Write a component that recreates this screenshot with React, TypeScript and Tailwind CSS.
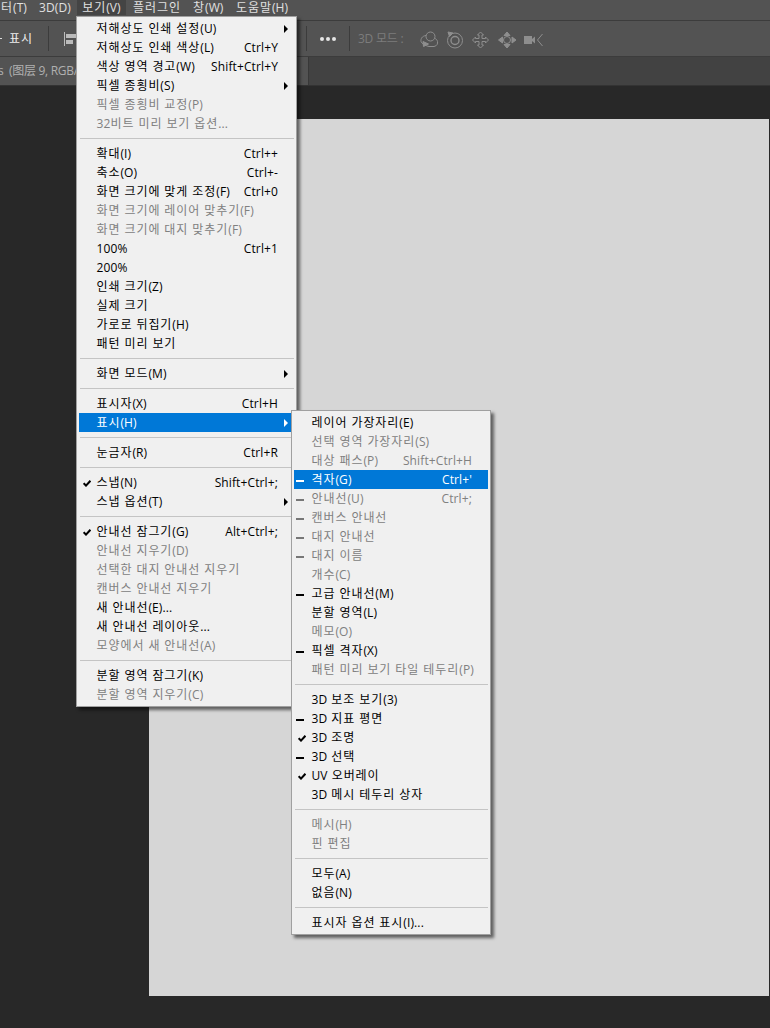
import React from "react";

type Row =
  | { sep: true }
  | { label: string; dis?: boolean; sc?: string; arrow?: boolean; hl?: boolean; mark?: "check" | "dash"; markDis?: boolean };

const S: Row = { sep: true };

const mainMenu: Row[] = [
  { label: "저해상도 인쇄 설정(U)", arrow: true },
  { label: "저해상도 인쇄 색상(L)", sc: "Ctrl+Y" },
  { label: "색상 영역 경고(W)", sc: "Shift+Ctrl+Y" },
  { label: "픽셀 종횡비(S)", arrow: true },
  { label: "픽셀 종횡비 교정(P)", dis: true },
  { label: "32비트 미리 보기 옵션...", dis: true },
  S,
  { label: "확대(I)", sc: "Ctrl++" },
  { label: "축소(O)", sc: "Ctrl+-" },
  { label: "화면 크기에 맞게 조정(F)", sc: "Ctrl+0" },
  { label: "화면 크기에 레이어 맞추기(F)", dis: true },
  { label: "화면 크기에 대지 맞추기(F)", dis: true },
  { label: "100%", sc: "Ctrl+1" },
  { label: "200%" },
  { label: "인쇄 크기(Z)" },
  { label: "실제 크기" },
  { label: "가로로 뒤집기(H)" },
  { label: "패턴 미리 보기" },
  S,
  { label: "화면 모드(M)", arrow: true },
  S,
  { label: "표시자(X)", sc: "Ctrl+H" },
  { label: "표시(H)", arrow: true, hl: true },
  S,
  { label: "눈금자(R)", sc: "Ctrl+R" },
  S,
  { label: "스냅(N)", sc: "Shift+Ctrl+;", mark: "check" },
  { label: "스냅 옵션(T)", arrow: true },
  S,
  { label: "안내선 잠그기(G)", sc: "Alt+Ctrl+;", mark: "check" },
  { label: "안내선 지우기(D)", dis: true },
  { label: "선택한 대지 안내선 지우기", dis: true },
  { label: "캔버스 안내선 지우기", dis: true },
  { label: "새 안내선(E)..." },
  { label: "새 안내선 레이아웃..." },
  { label: "모양에서 새 안내선(A)", dis: true },
  S,
  { label: "분할 영역 잠그기(K)" },
  { label: "분할 영역 지우기(C)", dis: true },
];

const subMenu: Row[] = [
  { label: "레이어 가장자리(E)" },
  { label: "선택 영역 가장자리(S)", dis: true },
  { label: "대상 패스(P)", dis: true, sc: "Shift+Ctrl+H" },
  { label: "격자(G)", sc: "Ctrl+'", hl: true, mark: "dash" },
  { label: "안내선(U)", dis: true, sc: "Ctrl+;", mark: "dash", markDis: true },
  { label: "캔버스 안내선", dis: true, mark: "dash", markDis: true },
  { label: "대지 안내선", dis: true, mark: "dash", markDis: true },
  { label: "대지 이름", dis: true, mark: "dash", markDis: true },
  { label: "개수(C)", dis: true },
  { label: "고급 안내선(M)", mark: "dash" },
  { label: "분할 영역(L)" },
  { label: "메모(O)", dis: true },
  { label: "픽셀 격자(X)", mark: "dash" },
  { label: "패턴 미리 보기 타일 테두리(P)", dis: true },
  S,
  { label: "3D 보조 보기(3)" },
  { label: "3D 지표 평면", mark: "dash" },
  { label: "3D 조명", mark: "check" },
  { label: "3D 선택", mark: "dash" },
  { label: "UV 오버레이", mark: "check" },
  { label: "3D 메시 테두리 상자" },
  S,
  { label: "메시(H)", dis: true },
  { label: "핀 편집", dis: true },
  S,
  { label: "모두(A)" },
  { label: "없음(N)" },
  S,
  { label: "표시자 옵션 표시(I)..." },
];

function Txt({ t }: { t: string }) {
  const parts = t.split(/([\uAC00-\uD7A3 ]+)/).filter(Boolean);
  return (
    <>
      {parts.map((p, i) =>
        /[\uAC00-\uD7A3 ]/.test(p[0]) ? (
          <span key={i} className="tracking-[0.92px]">
            {p}
          </span>
        ) : (
          <span key={i} className="tracking-[0.12px]">
            {p}
          </span>
        )
      )}
    </>
  );
}

function Mark({ kind, color }: { kind: "check" | "dash"; color: string }) {
  if (kind === "dash")
    return <span className="mt-[3px] ml-[2px] block h-[2px] w-[8px]" style={{ backgroundColor: color }} />;
  return (
    <svg className="mt-[1px] ml-[4px]" width="8" height="7" viewBox="0 0 8 7" fill="none">
      <path d="M0.7 3.2 L3 5.6 L7.4 0.8" stroke={color} strokeWidth="2" />
    </svg>
  );
}

function Menu({ rows, className }: { rows: Row[]; className: string }) {
  return (
    <div
      className={`absolute z-10 border border-[#a0a0a0] bg-[#f0f0f0] p-[2px] text-[12px] leading-[19px] shadow-[3px_3px_3px_rgba(0,0,0,0.55)] ${className}`}
    >
      {rows.map((r, i) => {
        if ("sep" in r) {
          return (
            <div key={i} className="flex h-[11px] items-center">
              <div className="ml-[1px] h-px w-full bg-[#c4c4c4]" />
            </div>
          );
        }
        const color = r.hl ? "#ffffff" : r.dis ? "#808080" : "#000000";
        const markColor = r.hl ? "#ffffff" : r.markDis ? "#777777" : "#000000";
        return (
          <div
            key={i}
            className={`flex h-[19px] items-center whitespace-nowrap ${r.hl ? "bg-[#0078d7]" : ""}`}
            style={{ color }}
          >
            <span className="flex w-[17.5px] shrink-0 items-center">
              {r.mark && <Mark kind={r.mark} color={markColor} />}
            </span>
            <span className="shrink-0 -translate-y-[0.5px]">
              <Txt t={r.label} />
            </span>
            <span className="ml-auto -translate-y-[0.5px] pr-[16px]">{r.sc && <Txt t={r.sc} />}</span>
            {r.arrow && (
              <span
                className="absolute right-[8px] h-0 w-0 border-y-[4px] border-l-[4px] border-y-transparent"
                style={{ borderLeftColor: r.hl ? "#ffffff" : "#000000" }}
              />
            )}
          </div>
        );
      })}
    </div>
  );
}

const topMenu = [
  { t: "터(T)", w: "w-[26px] pl-[1px]" },
  { t: "3D(D)", w: "w-[30px] ml-[13px]" },
  { t: "보기(V)", w: "w-[49px] ml-[8px] bg-[#444444] justify-center" },
  { t: "플러그인", w: "w-[48px] ml-[7px]" },
  { t: "창(W)", w: "w-[30px] ml-[12px]" },
  { t: "도움말(H)", w: "w-[51px] ml-[13px]" },
];

export default function App() {
  return (
    <div
      className="relative flex h-[1028px] w-[770px] flex-col overflow-hidden bg-[#282828]"
      style={{ fontFamily: '"Open Sans", "Noto Sans CJK KR", sans-serif' }}
    >
      <div className="flex h-[21px] shrink-0 items-start border-b border-[#3c3c3c] bg-[#535353] text-[12px] text-[#e0e0e0]">
        {topMenu.map((m) => (
          <div key={m.t} className={`flex h-[15px] items-center whitespace-nowrap ${m.w}`}>
            <Txt t={m.t} />
          </div>
        ))}
      </div>

      <div className="flex h-[36px] shrink-0 items-center border-b border-[#3c3c3c] bg-[#535353] text-[12px] text-[#eeeeee]">
        <span className="h-px w-[2px] bg-[#dddddd]" />
        <span className="ml-[7px] tracking-[0.92px]">표시</span>
        <span className="ml-[15px] h-[25px] w-px bg-[#3c3c3c]" />
        <svg className="ml-[15px]" width="14" height="14" viewBox="0 0 14 14" fill="none">
          <path d="M0.5 0V14" stroke="#bbbbbb" />
          <rect x="2" y="2" width="10" height="4" fill="#bbbbbb" />
          <rect x="2" y="8" width="7" height="4" fill="#bbbbbb" />
        </svg>
        <span className="ml-[228px] h-[25px] w-px bg-[#3c3c3c]" />
        <span className="ml-[13px] flex w-[16px] justify-between">
          <i className="block h-[4px] w-[4px] rounded-full bg-[#e6e6e6]" />
          <i className="block h-[4px] w-[4px] rounded-full bg-[#e6e6e6]" />
          <i className="block h-[4px] w-[4px] rounded-full bg-[#e6e6e6]" />
        </span>
        <span className="ml-[13px] h-[25px] w-px bg-[#3c3c3c]" />
        <span className="ml-[8px] w-[46px] whitespace-nowrap tracking-[-0.2px] text-[#7c7c7c]">3D 모드 :</span>
        <svg className="ml-[16px]" width="124" height="22" viewBox="0 0 124 22" fill="none" stroke="#8e8e8e" strokeWidth="1">
          {/* orbit */}
          <path d="M6 7.5 C2 8 0.5 11 1 13.5 C2 16 5 17.5 9 18.5 L14 18.5 C17 18 18 15.5 17.5 13.5 C17 11.5 16 11 15 10.5" />
          <circle cx="10.5" cy="8.5" r="4.5" />
          <path d="M3 13.5 L8.5 16 L3.5 18.5 Z" fill="#8e8e8e" />
          {/* roll */}
          <circle cx="35" cy="12.5" r="7.5" />
          <circle cx="35" cy="12.5" r="4" strokeWidth="1.4" />
          <path d="M28 4 L33 5 L29.5 8.5 Z" fill="#8e8e8e" />
          {/* pan */}
          <path d="M60.5 4 L63.5 7 L62 7 L62 10.5 L65.5 10.5 L65.5 9 L68.5 12 L65.5 15 L65.5 13.5 L62 13.5 L62 17 L63.5 17 L60.5 20 L57.5 17 L59 17 L59 13.5 L55.5 13.5 L55.5 15 L52.5 12 L55.5 9 L55.5 10.5 L59 10.5 L59 7 L57.5 7 Z" />
          {/* slide */}
          <path d="M87 4 L90 7.5 L84 7.5 Z M87 20 L90 16.5 L84 16.5 Z M78.5 12 L82.5 9 L82.5 15 Z M96 12 L92 9 L92 15 Z" fill="#8e8e8e" />
          <circle cx="87" cy="12" r="3.5" />
          {/* camera */}
          <rect x="104" y="8" width="8" height="8" fill="#8e8e8e" stroke="none" />
          <path d="M112 11 L115 8.5 L115 15.5 L112 13 Z" fill="#8e8e8e" stroke="none" />
          <path d="M122.5 6 L117.5 12 L122.5 18" />
        </svg>
      </div>

      <div className="flex h-[29px] shrink-0 items-center border-b border-[#333333] bg-[#424242] text-[12px] text-[#b0b0b0]">
        <div className="flex h-full w-[309px] items-center overflow-hidden border-r border-[#383838] bg-[#535353]">
          <span
            className="-ml-[2px] whitespace-nowrap tracking-[-0.3px]"
            style={{ fontFamily: '"Open Sans", "Noto Sans CJK SC", sans-serif' }}
          >
            s &nbsp;(图层 9, RGB/8
          </span>
        </div>
      </div>

      <div className="flex-1 pl-[149px] pt-[33px]">
        <div className="h-[877px] w-[620px] bg-[#d6d6d6]" />
      </div>

      <Menu rows={mainMenu} className="left-[76px] top-[16px] w-[221px]" />
      <Menu rows={subMenu} className="left-[291px] top-[410px] w-[200px]" />
    </div>
  );
}
